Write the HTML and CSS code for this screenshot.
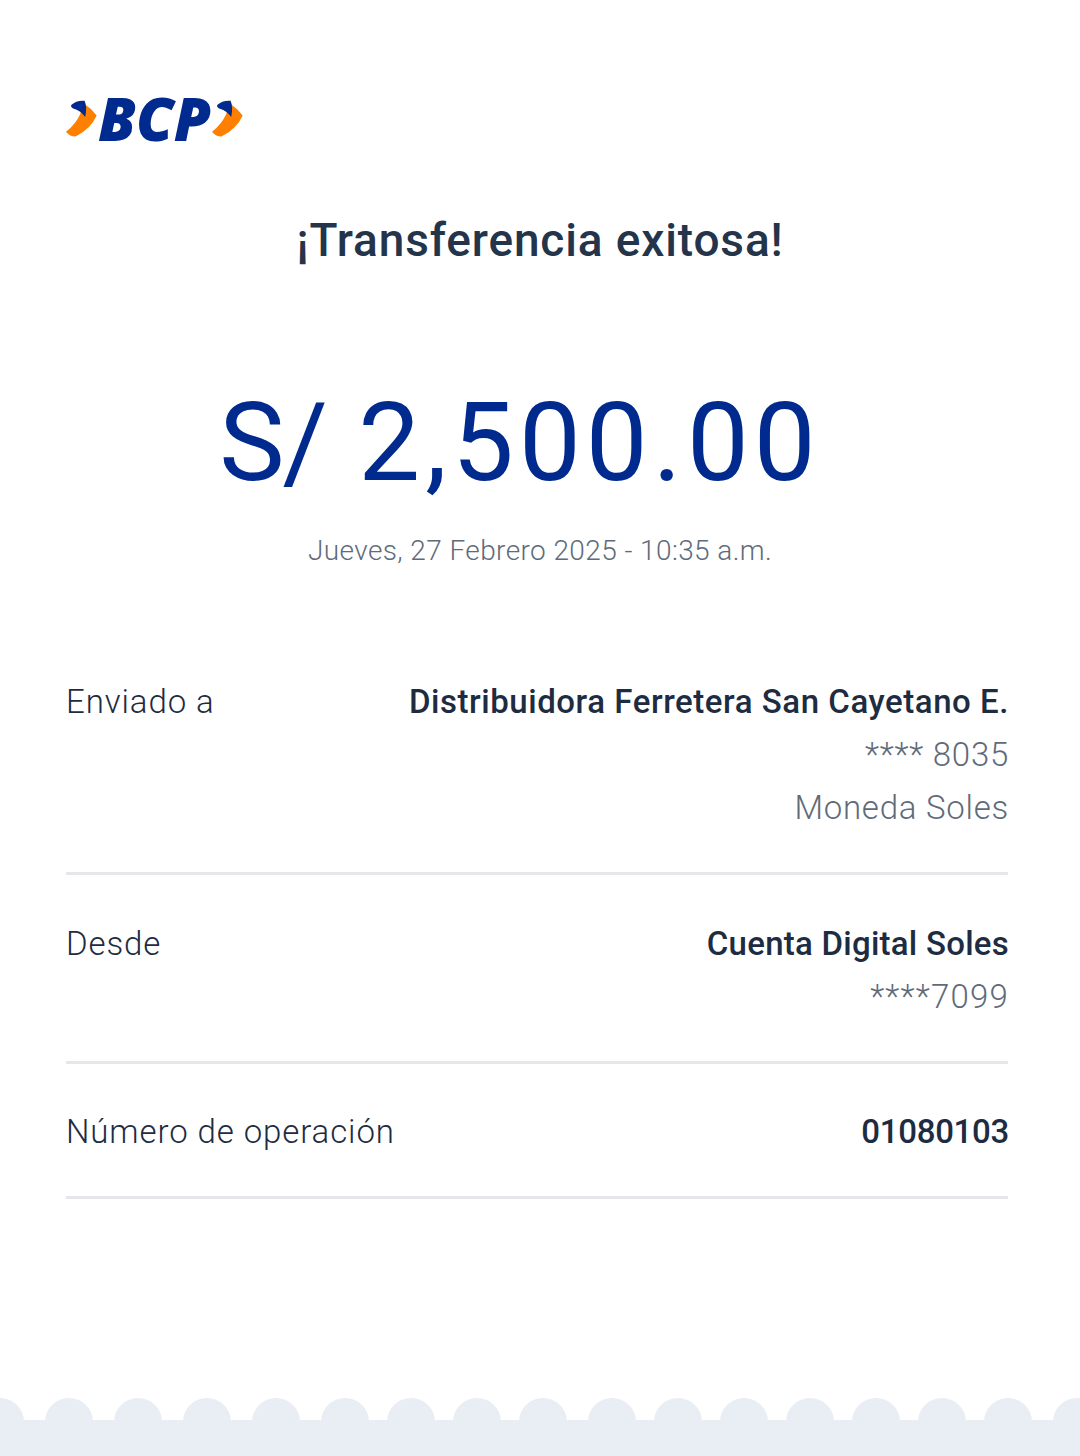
FILE: index.html
```html
<!DOCTYPE html>
<html>
<head>
    <title>Transferencia exitosa</title>
    <link rel="stylesheet" href="styles.css">
</head>
<body>
    <div class="receipt">
        <!-- Logo -->
        <div class="logo">
            <svg class="chevron" width="31" height="37" viewBox="46 58 95 113">
                <path fill="#ff7f00" d="M98 66 Q122 82 140 105 Q122 146 75 170 Q58 170 46 155 Q76 132 90 100 Z"/>
                <path fill="#002a8d" d="M62 73 Q78 58 103 60 Q111 78 105 110 Q90 90 68 84 Q60 80 62 73 Z"/>
            </svg>
            <span class="logo-text">BCP</span>
            <svg class="chevron" width="31" height="37" viewBox="46 58 95 113">
                <path fill="#ff7f00" d="M98 66 Q122 82 140 105 Q122 146 75 170 Q58 170 46 155 Q76 132 90 100 Z"/>
                <path fill="#002a8d" d="M62 73 Q78 58 103 60 Q111 78 105 110 Q90 90 68 84 Q60 80 62 73 Z"/>
            </svg>
        </div>

        <h1 class="title">¡Transferencia exitosa!</h1>
        <div class="amount"><span class="currency">S/</span> 2,500.00</div>
        <div class="date">Jueves, 27 Febrero 2025 - 10:35 a.m.</div>

        <!-- Detail rows -->
        <div class="details">
            <div class="row">
                <div class="label">Enviado a</div>
                <div class="values">
                    <div class="strong">Distribuidora Ferretera San Cayetano E.</div>
                    <div class="muted">**** 8035</div>
                    <div class="muted">Moneda Soles</div>
                </div>
            </div>
            <div class="row">
                <div class="label">Desde</div>
                <div class="values">
                    <div class="strong account">Cuenta Digital Soles</div>
                    <div class="muted masked">****7099</div>
                </div>
            </div>
            <div class="row">
                <div class="label">Número de operación</div>
                <div class="values">
                    <div class="strong digits">01080103</div>
                </div>
            </div>
        </div>
    </div>

    <!-- Scalloped bottom edge -->
    <svg class="scallops" width="1080" height="58" viewBox="0 0 1080 58">
        <rect x="0" y="22" width="1080" height="36"/>
        <circle cx="0" cy="24" r="24"/>
        <circle cx="69" cy="24" r="24"/>
        <circle cx="138" cy="24" r="24"/>
        <circle cx="207" cy="24" r="24"/>
        <circle cx="276" cy="24" r="24"/>
        <circle cx="345" cy="24" r="24"/>
        <circle cx="411" cy="24" r="24"/>
        <circle cx="477" cy="24" r="24"/>
        <circle cx="543" cy="24" r="24"/>
        <circle cx="612" cy="24" r="24"/>
        <circle cx="678" cy="24" r="24"/>
        <circle cx="744" cy="24" r="24"/>
        <circle cx="810" cy="24" r="24"/>
        <circle cx="876" cy="24" r="24"/>
        <circle cx="942" cy="24" r="24"/>
        <circle cx="1008" cy="24" r="24"/>
        <circle cx="1077" cy="24" r="24"/>
    </svg>
</body>
</html>
```

FILE: styles.css
```css
html, body {
    margin: 0;
    padding: 0;
    background-color: #ffffff;
}
body {
    font-family: Roboto, "Noto Sans", sans-serif;
    width: 1080px;
    height: 1456px;
    overflow: hidden;
    display: flex;
    flex-direction: column;
    justify-content: space-between;
}
.receipt {
    padding-top: 96px;
}
.logo {
    display: flex;
    align-items: center;
    height: 44px;
    gap: 1px;
    margin-left: 66px;
}
.logo-text {
    font-family: "Open Sans", sans-serif;
    font-size: 60px;
    line-height: 44px;
    font-weight: 800;
    font-style: italic;
    color: #002a8d;
}
.chevron {
    flex: none;
}
.title {
    margin: 70px 0 0;
    text-align: center;
    font-size: 46px;
    line-height: 60px;
    font-weight: 500;
    letter-spacing: 0.85px;
    color: #24344a;
}
.amount {
    margin-top: 108px;
    padding-right: 40px;
    text-align: center;
    font-size: 110px;
    line-height: 130px;
    font-weight: 400;
    letter-spacing: 5.1px;
    color: #002a8d;
}
.currency {
    letter-spacing: -2px;
}
.date {
    margin-top: 25px;
    text-align: center;
    font-size: 28px;
    line-height: 36px;
    font-weight: 300;
    letter-spacing: 0.4px;
    color: #5f6b7a;
}
.details {
    margin: 106px 72px 0 66px;
}
.row {
    display: flex;
    justify-content: space-between;
    padding: 41.5px 0 38px;
    border-bottom: 3px solid #e5e7eb;
}
.row:first-child {
    padding-top: 0;
}
.label {
    font-size: 33px;
    line-height: 53px;
    font-weight: 300;
    letter-spacing: 0.9px;
    color: #1e2c42;
}
.values {
    margin-right: -1px;
    text-align: right;
    font-size: 33px;
    line-height: 53px;
}
.strong {
    font-weight: 500;
    letter-spacing: 0.55px;
    color: #1e2c42;
}
.account {
    letter-spacing: 0.25px;
}
.digits {
    letter-spacing: -0.3px;
}
.muted {
    font-weight: 300;
    letter-spacing: 0.75px;
    color: #5f6b7a;
}
.masked {
    letter-spacing: 1.2px;
}
.scallops {
    display: block;
    flex: none;
    fill: #e9edf4;
}
```
